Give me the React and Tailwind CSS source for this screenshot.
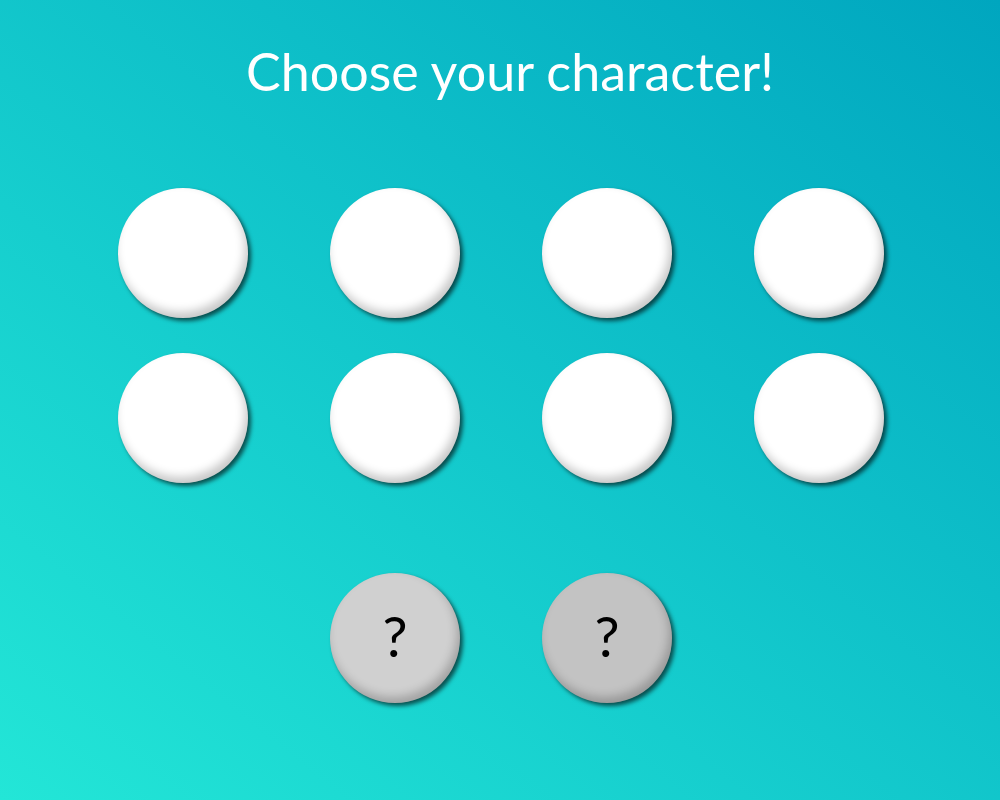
export default function App() {
  const circle =
    "w-[130px] h-[130px] rounded-full shadow-[inset_-3px_-6px_10px_rgba(0,0,0,0.22),3px_3px_4px_rgba(0,0,0,0.62)]";
  const cells = Array.from({ length: 8 });
  return (
    <div className="w-[1000px] h-[800px] bg-[linear-gradient(to_top_right,#23e6d7,#00a6bf)] flex flex-col items-center font-['Lato',sans-serif]">
      <h1 className="mt-[36px] h-[70px] pl-[20px] text-white text-[52px] leading-[70px]">
        Choose your character!
      </h1>
      <div className="mt-[82px] pl-[2px] grid grid-cols-[repeat(4,212px)] gap-y-[35px]">
        {cells.map((_, i) => (
          <div key={i} className="flex justify-center">
            <div className={`${circle} bg-white`} />
          </div>
        ))}
      </div>
      <div className="mt-[90px] pl-[2px] grid grid-cols-[repeat(4,212px)]">
        <div />
        <div className="flex justify-center">
          <div className={`${circle} bg-[#d0d0d0] flex items-center justify-center text-[56px] font-normal leading-none text-black`}>
            <span className="-mt-[4px]">?</span>
          </div>
        </div>
        <div className="flex justify-center">
          <div className={`${circle} bg-[#c3c3c3] flex items-center justify-center text-[56px] font-normal leading-none text-black`}>
            <span className="-mt-[4px]">?</span>
          </div>
        </div>
        <div />
      </div>
    </div>
  );
}
